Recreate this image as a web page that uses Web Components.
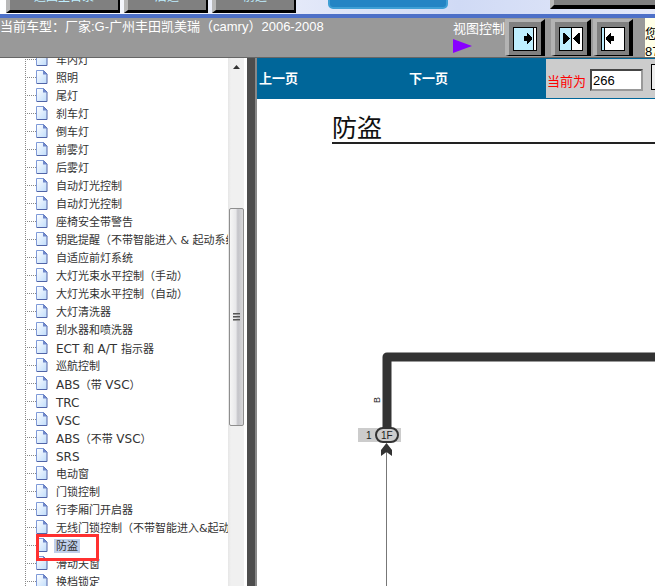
<!DOCTYPE html>
<html lang="zh-CN">
<head>
<meta charset="utf-8">
<title>防盗</title>
<style>
  html, body {
    height: 100%;
    margin: 0;
  }

  body {
    overflow: hidden;
    font-family: "Liberation Sans", "Noto Sans CJK SC", sans-serif;
    font-size: 13px;
    background: #fff;
  }
</style>
</head>
<body>
<manual-app></manual-app>

<script>
class TopButton extends HTMLElement {
  constructor() {
    super();
    this.attachShadow({ mode: "open" });
    this.shadowRoot.innerHTML = `
      <style>
        :host {
          display: block;
          flex: none;
          width: var(--top-button-width, 84px);
        }

        button {
          display: flex;
          align-items: flex-end;
          justify-content: center;
          box-sizing: border-box;
          width: 100%;
          height: 32px;
          padding: 0 0 7px;
          border: solid;
          border-width: 4px 2px 3px 4px;
          border-color: #b8b8b8 #000 #000 #b8b8b8;
          background: #808080;
          color: #bfefff;
          font: 12px/12px "Liberation Sans", "Noto Sans CJK SC", sans-serif;
        }
      </style>
      <button type="button"><slot></slot></button>
    `;
  }
}
customElements.define("top-button", TopButton);

class TopBar extends HTMLElement {
  constructor() {
    super();
    this.attachShadow({ mode: "open" });
    this.shadowRoot.innerHTML = `
      <style>
        :host {
          display: flex;
          align-items: flex-end;
          gap: 4px;
          box-sizing: border-box;
          height: 18px;
          padding: 0 0 1px 6px;
          overflow: hidden;
          background: linear-gradient(to right, #fff, #e4e9f9 45%, #d0daf5 70%, #e4e9f9);
          border-bottom: 4px solid #4d70c8;
        }

        .wide {
          --top-button-width: 114px;
        }

        .tab {
          flex: none;
          width: 120px;
          height: 30px;
          margin: 0 98px 4px 28px;
          box-sizing: border-box;
          border: 2px solid #3f9fd5;
          border-radius: 5px;
          background: #2484c4;
        }

        .panel {
          flex: 1;
          height: 30px;
          margin-bottom: 4px;
          box-sizing: border-box;
          border: solid #000;
          border-width: 0 0 4px 4px;
          border-left-color: #b8b8b8;
          background: #808080;
        }
      </style>
      <top-button class="wide">返回主目录</top-button>
      <top-button>后退</top-button>
      <top-button>前进</top-button>
      <div class="tab"></div>
      <div class="panel"></div>
    `;
  }
}
customElements.define("top-bar", TopBar);

class ViewButton extends HTMLElement {
  constructor() {
    super();
    this.attachShadow({ mode: "open" });
    this.shadowRoot.innerHTML = `
      <style>
        :host {
          display: block;
        }

        button {
          display: flex;
          align-items: center;
          justify-content: center;
          box-sizing: border-box;
          width: 40px;
          height: 37px;
          padding: 0;
          border: solid;
          border-width: 3px 4px 1px 4px;
          border-color: #b3b3b3 #000 #000 #b3b3b3;
          background: #808080;
        }

        svg {
          display: block;
        }
      </style>
      <button type="button">
        <svg width="24" height="24" viewBox="0 0 24 24" shape-rendering="crispEdges"></svg>
      </button>
    `;
  }

  connectedCallback() {
    const icons = {
      left: `<path fill="#bfefff" d="M1 1h19v22H1z"/><path d="M20 1h1v22h-1z"/>
             <path d="M11 9h3V6h1v1h1v1h1v1h1v1h1v3h-1v1h-1v1h-1v1h-1v1h-1v-3h-3z"/>`,
      both: `<path fill="#bfefff" d="M1 1h11v22H1z"/><path d="M12 1h1v22h-1z"/>
             <path d="M4 6h2v1h1v1h1v1h1v1h1v1h1v1h-1v1h-1v1h-1v1h-1v1H6v1H4z"/>
             <path d="M21 6h-2v1h-1v1h-1v1h-1v1h-1v1h-1v1h1v1h1v1h1v1h1v1h1v1h2z"/>`,
      right: `<path fill="#bfefff" d="M1 1h2v22H1z"/><path d="M3 1h1v22H3z"/>
              <path d="M13 9h-3V6H9v1H8v1H7v1H6v1H5v3h1v1h1v1h1v1h1v1h1v-3h3z"/>`
    };
    const side = this.getAttribute("side");
    this.shadowRoot.querySelector("svg").innerHTML =
      `<path d="M0 0h24v24H0z"/><path fill="#fff" d="M1 1h22v22H1z"/>` + icons[side];
    this.shadowRoot.querySelector("button").setAttribute("aria-label", side);
  }
}
customElements.define("view-button", ViewButton);

class CarHeader extends HTMLElement {
  constructor() {
    super();
    this.attachShadow({ mode: "open" });
    this.shadowRoot.innerHTML = `
      <style>
        :host {
          display: flex;
          box-sizing: border-box;
          height: 40px;
          overflow: hidden;
          background: #999;
          border-bottom: 1px solid #666;
          color: #fff;
          line-height: 18px;
          white-space: nowrap;
        }

        .car {
          flex: 1;
        }

        .view {
          width: 52px;
          padding-top: 2px;
        }

        .view svg {
          display: block;
        }

        .buttons {
          display: flex;
          gap: 2px;
          padding-top: 1px;
        }

        view-button:first-child {
          margin-right: 4px;
        }

        .note {
          width: 10px;
          margin-left: 12px;
          padding-top: 7px;
          overflow: hidden;
          background: #ffffe8;
          color: #000;
        }
      </style>
      <div class="car"><slot></slot></div>
      <div class="view">视图控制
        <svg width="19" height="16" viewBox="0 0 19 16"><path fill="#80f" d="M0 1l19 7-19 7z"/></svg>
      </div>
      <div class="buttons">
        <view-button side="left"></view-button>
        <view-button side="both"></view-button>
        <view-button side="right"></view-button>
      </div>
      <div class="note">您<br>87</div>
    `;
  }
}
customElements.define("car-header", CarHeader);

class TreeItem extends HTMLElement {
  constructor() {
    super();
    this.attachShadow({ mode: "open" });
    this.shadowRoot.innerHTML = `
      <style>
        :host {
          position: relative;
          display: flex;
          flex: none;
          align-items: flex-start;
          height: 18px;
          margin-left: 25px;
          background: repeating-linear-gradient(to bottom, #888 0 1px, transparent 1px 2px) left / 1px 100% no-repeat;
          font: 11px/14px "DejaVu Sans", "Noto Sans CJK SC", sans-serif;
          white-space: nowrap;
        }

        .branch {
          flex: none;
          width: 11px;
          height: 1px;
          margin-top: 8px;
          background: repeating-linear-gradient(to right, #888 0 1px, transparent 1px 2px);
        }

        svg {
          flex: none;
          margin-right: 6px;
        }

        a {
          height: 14px;
          margin-top: 2px;
          padding: 0 2px;
          color: #333;
          line-height: 16px;
          text-decoration: none;
        }

        ::slotted(.latin) {
          font-size: 12px;
        }

        :host([selected]) a {
          background: #c0cfea;
        }

        :host([selected])::after {
          content: "";
          position: absolute;
          z-index: 1;
          left: 11px;
          top: -3px;
          width: 57px;
          height: 21px;
          border: 3px solid #ff3030;
        }
      </style>
      <span class="branch"></span>
      <svg width="12" height="16" viewBox="0 0 12 16">
        <defs>
          <linearGradient id="g" x1="0" y1="0" x2="1" y2="1">
            <stop offset="0" stop-color="#fff"/>
            <stop offset="1" stop-color="#bfdcfb"/>
          </linearGradient>
        </defs>
        <path fill="url(#g)" d="M.5 1.500h7l3.500 3.500v9.500H.5z"/>
        <path fill="none" stroke="#7f9ad8" d="M.5 14V1.500h7"/>
        <path fill="none" stroke="#5064a8" d="M7.500 1.500L11 5v9.500H.5"/>
        <path fill="#6f88cc" d="M7 1l4.500 4.500H7z"/>
      </svg>
      <a href="#"><slot></slot></a>
    `;
  }
}
customElements.define("tree-item", TreeItem);

class TreePanel extends HTMLElement {
  constructor() {
    super();
    this.attachShadow({ mode: "open" });
    this.shadowRoot.innerHTML = `
      <style>
        :host {
          display: flex;
          min-height: 0;
          padding-right: 3px;
          background: #fff;
        }

        .list {
          flex: 1;
          min-width: 0;
          overflow: hidden;
        }

        .scrolled {
          display: flex;
          flex-direction: column;
          margin-top: -7px;
        }

        .bar {
          display: flex;
          flex-direction: column;
          align-items: center;
          width: 16px;
          background: linear-gradient(to right, #e6e6e6, #f0f0f0 3px);
        }

        .arrow {
          height: 150px;
          padding-top: 7px;
          box-sizing: border-box;
        }

        .arrow svg {
          display: block;
        }

        .thumb {
          display: flex;
          align-items: center;
          justify-content: center;
          box-sizing: border-box;
          width: 15px;
          height: 218px;
          border: 1px solid #8e8e8e;
          border-radius: 2px;
          background: linear-gradient(to right, #f6f6f6, #e8e8ea 45%, #c4c4c9 60%, #d8d8da);
        }

        .grip {
          width: 7px;
          height: 8px;
          background: repeating-linear-gradient(to bottom, #555 0 1px, #999 1px 2px, transparent 2px 3px);
        }
      </style>
      <div class="list"><div class="scrolled"><slot></slot></div></div>
      <div class="bar">
        <div class="arrow"><svg width="7" height="4" viewBox="0 0 7 4"><path fill="#333" d="M0 4L3.500 0 7 4z"/></svg></div>
        <div class="thumb"><div class="grip"></div></div>
      </div>
    `;
  }
}
customElements.define("tree-panel", TreePanel);

class PageNav extends HTMLElement {
  constructor() {
    super();
    this.attachShadow({ mode: "open" });
    this.shadowRoot.innerHTML = `
      <style>
        :host {
          display: flex;
          height: 41px;
          background: #069;
          overflow: hidden;
          white-space: nowrap;
        }

        .links {
          display: grid;
          flex: none;
          grid-template-columns: 150px 1fr;
          align-items: center;
          box-sizing: border-box;
          width: 289px;
          padding: 0 0 2px 2px;
        }

        a {
          color: #fff;
          font-weight: bold;
          text-decoration: none;
        }

        form {
          flex: 1;
          display: flex;
          align-items: center;
          gap: 4px;
          min-width: 0;
          margin: 1px 0;
          padding: 3px 0 0 1px;
          background: #ccc;
        }

        label {
          color: #f00;
          line-height: 18px;
          padding-top: 4px;
        }

        input {
          flex: none;
          box-sizing: border-box;
          width: 53px;
          height: 22px;
          padding: 1px;
          border: 2px inset #999;
          background: #fff;
          color: #000;
          font: 13px "Liberation Sans", sans-serif;
        }

        button {
          flex: none;
          width: 24px;
          height: 26px;
          margin: 0 0 6px 4px;
          border: 1px solid #000;
          background: #eee;
        }
      </style>
      <nav class="links"><a href="#">上一页</a><a href="#">下一页</a></nav>
      <form>
        <label for="page">当前为</label>
        <input id="page" type="text" value="266">
        <button type="button" aria-label="go"></button>
      </form>
    `;
  }
}
customElements.define("page-nav", PageNav);

class WiringSheet extends HTMLElement {
  constructor() {
    super();
    this.attachShadow({ mode: "open" });
    this.shadowRoot.innerHTML = `
      <style>
        :host {
          display: flex;
          flex-direction: column;
          min-height: 0;
          padding-left: 75px;
          background: #fff;
        }

        h1 {
          margin: 0;
          padding: 11px 0 0;
          border-bottom: 2px solid #222;
          color: #111;
          font: 25px/32px "Noto Sans CJK SC", sans-serif;
        }

        svg {
          display: block;
          flex: 1;
          width: 100%;
          min-height: 0;
        }

        text {
          fill: #222;
          font: 10px "Liberation Sans", sans-serif;
        }
      </style>
      <h1><slot></slot></h1>
      <svg>
        <path fill="none" stroke="#333" stroke-width="9" stroke-linejoin="round" d="M55 284V213H3000"/>
        <path fill="none" stroke="#777" d="M54.500 305V3000"/>
        <path fill="#ccc" d="M26 284h43v14H26z"/>
        <rect x="44" y="284" width="22" height="14" rx="7" fill="#ccc" stroke="#333" stroke-width="2"/>
        <path fill="#333" d="M54.500 299L60 306v6l-5.500-4-5.500 4v-6z"/>
        <text x="34" y="295">1</text>
        <text x="49" y="295">1F</text>
        <text transform="translate(48 259) rotate(-90)" style="font-size: 9px">B</text>
      </svg>
    `;
  }
}
customElements.define("wiring-sheet", WiringSheet);

class ManualApp extends HTMLElement {
  constructor() {
    super();
    this.attachShadow({ mode: "open" });
    this.shadowRoot.innerHTML = `
      <style>
        :host {
          display: flex;
          flex-direction: column;
          height: 100vh;
        }

        top-bar, car-header {
          flex: none;
        }

        main {
          flex: 1;
          display: grid;
          grid-template-columns: 247px 8px minmax(0, 1fr);
          min-height: 0;
        }

        .divider {
          background: #4d4d4d;
        }

        .content {
          display: flex;
          flex-direction: column;
          min-height: 0;
          border-left: 2px solid #888;
        }

        wiring-sheet {
          flex: 1;
        }
      </style>
      <top-bar></top-bar>
      <car-header>当前车型：厂家:G-广州丰田凯美瑞（camry）2006-2008</car-header>
      <main>
        <tree-panel></tree-panel>
        <div class="divider"></div>
        <div class="content">
          <page-nav></page-nav>
          <wiring-sheet>防盗</wiring-sheet>
        </div>
      </main>
    `;
  }

  connectedCallback() {
    const items = [
      "车内灯", "照明", "尾灯", "刹车灯", "倒车灯", "前雾灯", "后雾灯",
      "自动灯光控制", "自动灯光控制", "座椅安全带警告",
      "钥匙提醒（不带智能进入 & 起动系统）", "自适应前灯系统",
      "大灯光束水平控制（手动）", "大灯光束水平控制（自动）", "大灯清洗器",
      "刮水器和喷洗器", "ECT 和 A/T 指示器", "巡航控制", "ABS（带 VSC）",
      "TRC", "VSC", "ABS（不带 VSC）", "SRS", "电动窗", "门锁控制",
      "行李厢门开启器", "无线门锁控制（不带智能进入&起动系统）", "防盗",
      "滑动天窗", "换档锁定"
    ];
    const tree = this.shadowRoot.querySelector("tree-panel");
    items.forEach(name => {
      const item = document.createElement("tree-item");
      // latin runs are set one size larger than the Chinese text
      name.split(/([A-Z][A-Z/ ]*)/).filter(Boolean).forEach(part => {
        if (/^[A-Z]/.test(part)) {
          const span = document.createElement("span");
          span.className = "latin";
          span.textContent = part;
          item.appendChild(span);
        } else {
          item.append(part);
        }
      });
      if (name === "防盗") item.setAttribute("selected", "");
      tree.appendChild(item);
    });
  }
}
customElements.define("manual-app", ManualApp);
</script>
</body>
</html>
